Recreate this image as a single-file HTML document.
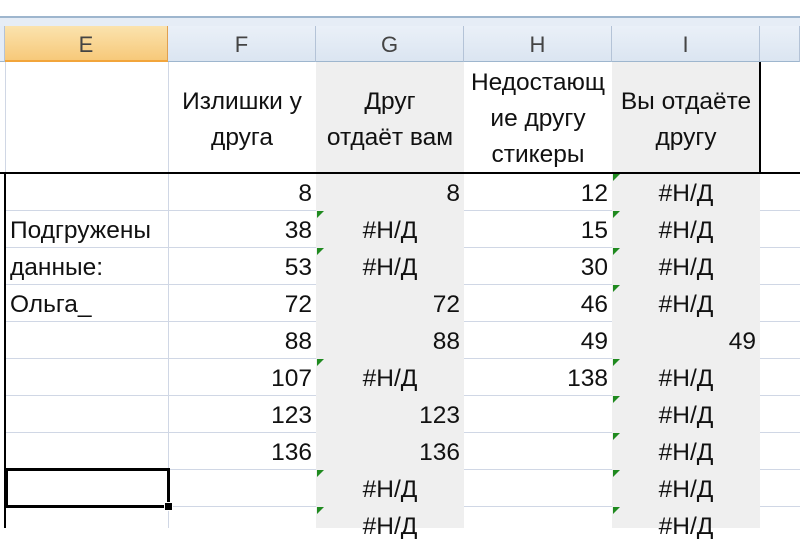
<!DOCTYPE html>
<html><head><meta charset="utf-8"><style>
body{margin:0;width:800px;height:528px;overflow:hidden;background:#fff;position:relative;font-family:"Liberation Sans","DejaVu Sans",sans-serif;color:#111}
div{position:absolute;box-sizing:border-box}
.ch{top:26px;height:36px;background:linear-gradient(#eaf0f8,#dbe5f1);border-right:1px solid #b4c3d7;border-bottom:1px solid #9eb6ce;text-align:center;font-size:22px;line-height:37px;color:#444}
.gl{height:1px;background:#d0d7e5}
.vl{width:1px;background:#d0d7e5}
.t{font-size:24.5px;height:37px;line-height:42px;white-space:nowrap}
.r{text-align:right}
.c{text-align:center}
.tri{width:0;height:0;border-top:7px solid #1f8a1f;border-right:7px solid transparent}
.hd{font-size:24.5px;line-height:36px;text-align:center;white-space:nowrap}
</style></head><body>
<div style="left:0;top:16px;width:800px;height:2px;background:#9eb6ce"></div>
<div style="left:0;top:18px;width:800px;height:8px;background:#e6edf6"></div>
<div class="ch" style="left:0;width:5px;background:#e4ecf7"></div>
<div class="ch" style="left:5px;width:163px;background:linear-gradient(#fbe3ae,#f7c97a);border-bottom:2px solid #f2a53b;border-right:1px solid #e0a050">E</div>
<div class="ch" style="left:168px;width:148px">F</div>
<div class="ch" style="left:316px;width:148px">G</div>
<div class="ch" style="left:464px;width:148px">H</div>
<div class="ch" style="left:612px;width:148px">I</div>
<div class="ch" style="left:760px;width:40px"></div>
<div style="left:316px;top:62px;width:148px;height:466px;background:#efefef"></div>
<div style="left:612px;top:62px;width:148px;height:466px;background:#efefef"></div>
<div class="vl" style="left:168px;top:62px;height:466px"></div>
<div class="vl" style="left:5px;top:62px;height:111px"></div>
<div class="gl" style="left:5px;top:210px;width:311px"></div><div class="gl" style="left:464px;top:210px;width:148px"></div><div class="gl" style="left:760px;top:210px;width:40px"></div>
<div class="gl" style="left:5px;top:247px;width:311px"></div><div class="gl" style="left:464px;top:247px;width:148px"></div><div class="gl" style="left:760px;top:247px;width:40px"></div>
<div class="gl" style="left:5px;top:284px;width:311px"></div><div class="gl" style="left:464px;top:284px;width:148px"></div><div class="gl" style="left:760px;top:284px;width:40px"></div>
<div class="gl" style="left:5px;top:321px;width:311px"></div><div class="gl" style="left:464px;top:321px;width:148px"></div><div class="gl" style="left:760px;top:321px;width:40px"></div>
<div class="gl" style="left:5px;top:358px;width:311px"></div><div class="gl" style="left:464px;top:358px;width:148px"></div><div class="gl" style="left:760px;top:358px;width:40px"></div>
<div class="gl" style="left:5px;top:395px;width:311px"></div><div class="gl" style="left:464px;top:395px;width:148px"></div><div class="gl" style="left:760px;top:395px;width:40px"></div>
<div class="gl" style="left:5px;top:432px;width:311px"></div><div class="gl" style="left:464px;top:432px;width:148px"></div><div class="gl" style="left:760px;top:432px;width:40px"></div>
<div class="gl" style="left:5px;top:469px;width:311px"></div><div class="gl" style="left:464px;top:469px;width:148px"></div><div class="gl" style="left:760px;top:469px;width:40px"></div>
<div class="gl" style="left:5px;top:506px;width:311px"></div><div class="gl" style="left:464px;top:506px;width:148px"></div><div class="gl" style="left:760px;top:506px;width:40px"></div>
<div style="left:0;top:172px;width:800px;height:2px;background:#000"></div>
<div style="left:4px;top:172px;width:2px;height:356px;background:#000"></div>
<div style="left:759px;top:62px;width:2px;height:111px;background:#000"></div>
<div class="hd" style="left:168px;top:84px;width:148px">Излишки у<br>друга</div>
<div class="hd" style="left:316px;top:84px;width:148px">Друг<br>отдаёт вам</div>
<div class="hd" style="left:464px;top:65px;width:148px">Недостающ<br>ие другу<br>стикеры</div>
<div class="hd" style="left:612px;top:84px;width:148px">Вы отдаёте<br>другу</div>
<div class="t" style="left:10px;top:210px">Подгружены</div>
<div class="t" style="left:10px;top:247px">данные:</div>
<div class="t" style="left:10px;top:284px">Ольга_</div>
<div class="t r" style="left:168px;top:173px;width:144px">8</div>
<div class="t r" style="left:168px;top:210px;width:144px">38</div>
<div class="t r" style="left:168px;top:247px;width:144px">53</div>
<div class="t r" style="left:168px;top:284px;width:144px">72</div>
<div class="t r" style="left:168px;top:321px;width:144px">88</div>
<div class="t r" style="left:168px;top:358px;width:144px">107</div>
<div class="t r" style="left:168px;top:395px;width:144px">123</div>
<div class="t r" style="left:168px;top:432px;width:144px">136</div>
<div class="t r" style="left:316px;top:173px;width:144px">8</div>
<div class="t c" style="left:316px;top:210px;width:148px">#Н/Д</div>
<div class="t c" style="left:316px;top:247px;width:148px">#Н/Д</div>
<div class="t r" style="left:316px;top:284px;width:144px">72</div>
<div class="t r" style="left:316px;top:321px;width:144px">88</div>
<div class="t c" style="left:316px;top:358px;width:148px">#Н/Д</div>
<div class="t r" style="left:316px;top:395px;width:144px">123</div>
<div class="t r" style="left:316px;top:432px;width:144px">136</div>
<div class="t c" style="left:316px;top:469px;width:148px">#Н/Д</div>
<div class="t c" style="left:316px;top:506px;width:148px">#Н/Д</div>
<div class="t r" style="left:464px;top:173px;width:144px">12</div>
<div class="t r" style="left:464px;top:210px;width:144px">15</div>
<div class="t r" style="left:464px;top:247px;width:144px">30</div>
<div class="t r" style="left:464px;top:284px;width:144px">46</div>
<div class="t r" style="left:464px;top:321px;width:144px">49</div>
<div class="t r" style="left:464px;top:358px;width:144px">138</div>
<div class="t c" style="left:612px;top:173px;width:148px">#Н/Д</div>
<div class="t c" style="left:612px;top:210px;width:148px">#Н/Д</div>
<div class="t c" style="left:612px;top:247px;width:148px">#Н/Д</div>
<div class="t c" style="left:612px;top:284px;width:148px">#Н/Д</div>
<div class="t r" style="left:612px;top:321px;width:144px">49</div>
<div class="t c" style="left:612px;top:358px;width:148px">#Н/Д</div>
<div class="t c" style="left:612px;top:395px;width:148px">#Н/Д</div>
<div class="t c" style="left:612px;top:432px;width:148px">#Н/Д</div>
<div class="t c" style="left:612px;top:469px;width:148px">#Н/Д</div>
<div class="t c" style="left:612px;top:506px;width:148px">#Н/Д</div>
<div class="tri" style="left:317px;top:211px"></div>
<div class="tri" style="left:317px;top:248px"></div>
<div class="tri" style="left:317px;top:359px"></div>
<div class="tri" style="left:317px;top:470px"></div>
<div class="tri" style="left:317px;top:507px"></div>
<div class="tri" style="left:613px;top:174px"></div>
<div class="tri" style="left:613px;top:211px"></div>
<div class="tri" style="left:613px;top:248px"></div>
<div class="tri" style="left:613px;top:285px"></div>
<div class="tri" style="left:613px;top:359px"></div>
<div class="tri" style="left:613px;top:396px"></div>
<div class="tri" style="left:613px;top:433px"></div>
<div class="tri" style="left:613px;top:470px"></div>
<div class="tri" style="left:613px;top:507px"></div>
<div style="left:5px;top:468px;width:165px;height:40px;border:3px solid #000"></div>
<div style="left:164px;top:502px;width:9px;height:9px;background:#000;border:1px solid #fff"></div>
</body></html>
